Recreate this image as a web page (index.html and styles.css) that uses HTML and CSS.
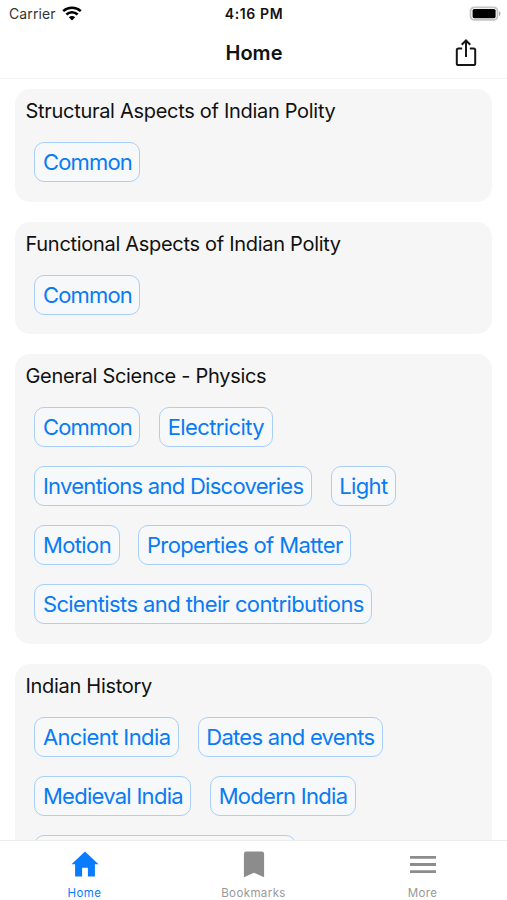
FILE: index.html
```html
<!DOCTYPE html>
<html lang="en">
<head>
<meta charset="utf-8">
<title>Home</title>
<link rel="stylesheet" href="styles.css">
</head>
<body>
<div class="app">
  <div class="status">
    <div class="carrier"><span>Carrier</span>
      <svg width="20" height="15" viewBox="0 0 20 15" fill="none" stroke="#000" stroke-width="2.5"><path d="M1.2 5.2C6.2.6 13.8.6 18.8 5.2M4.4 8.5c3.2-3 8-3 11.2 0"/><path d="M10 14.5 6.8 11.2c1.8-1.7 4.6-1.7 6.4 0z" fill="#000" stroke="none"/></svg>
    </div>
    <div class="time">4:16 PM</div>
    <div class="battery"><svg width="32" height="16" viewBox="0 0 32 16"><rect x="1.5" y="1.3" width="27" height="12.6" rx="3.8" fill="#fff" stroke="#c4c4c4" stroke-width="1.8"/><rect x="3.6" y="3" width="23" height="9.2" rx="1.6" fill="#000"/><path d="M30 5.3c2 .8 2 4 0 4.8z" fill="#aaa"/></svg></div>
  </div>
  <header class="nav">
    <h1>Home</h1>
    <svg class="share" width="22" height="28" viewBox="0 0 22 28" fill="none" stroke="#161616" stroke-width="2"><path d="M7.2 9.4H3.4a1.6 1.6 0 0 0-1.6 1.6v13.4A1.6 1.6 0 0 0 3.4 26h15.2a1.6 1.6 0 0 0 1.6-1.6V11a1.6 1.6 0 0 0-1.6-1.6h-3.8M11 18V1.8M6.7 5.8 11 1.5l4.3 4.3"/></svg>
  </header>
  <main class="list">
    <section class="card"><h2>Structural Aspects of Indian Polity</h2>
      <div class="chips"><a class="chip tight">Common</a></div></section>
    <section class="card"><h2>Functional Aspects of Indian Polity</h2>
      <div class="chips"><a class="chip tight">Common</a></div></section>
    <section class="card"><h2>General Science - Physics</h2>
      <div class="chips"><a class="chip tight">Common</a><a class="chip">Electricity</a><a class="chip snug">Inventions and Discoveries</a><a class="chip">Light</a><a class="chip">Motion</a><a class="chip">Properties of Matter</a><a class="chip">Scientists and their contributions</a></div></section>
    <section class="card"><h2>Indian History</h2>
      <div class="chips"><a class="chip">Ancient India</a><a class="chip snug">Dates and events</a><a class="chip snug">Medieval India</a><a class="chip snug">Modern India</a><a class="chip chip-partial"></a></div></section>
  </main>
  <nav class="tabs">
    <a class="tab active"><svg width="28" height="28" viewBox="0 0 28 28" fill="currentColor"><path d="M14 1.5.5 14.2h3.6v12.3h7v-8.7h5.8v8.7h7V14.2h3.6z"/></svg><span>Home</span></a>
    <a class="tab"><svg width="28" height="28" viewBox="0 0 28 28" fill="currentColor"><path d="M6.3 1.6h15.4A2.4 2.4 0 0 1 24.1 4v23.2L14 22.8 3.9 27.2V4a2.4 2.4 0 0 1 2.4-2.4z"/></svg><span>Bookmarks</span></a>
    <a class="tab"><svg width="28" height="28" viewBox="0 0 28 28" fill="currentColor"><path d="M1 5.9h26v2.8H1zM1 13.1h26v2.8H1zM1 20.3h26v2.8H1z"/></svg><span>More</span></a>
  </nav>
</div>
</body>
</html>
```
FILE: styles.css
```css
* { box-sizing: border-box; }
body { margin: 0; background: #fff; font-family: Inter, "Liberation Sans", sans-serif; color: #111; }
.app { height: 900px; display: flex; flex-direction: column; overflow: hidden; }
.status { height: 27px; flex: none; display: grid; grid-template-columns: 1fr auto 1fr; align-items: center; padding: 0 6px 0 9px; font-size: 14px; }
.carrier { display: flex; align-items: center; gap: 6px; color: #333; }
.carrier span { letter-spacing: .1px; }
.time { font-weight: 600; letter-spacing: .6px; color: #111; margin-right: 2px; }
.battery { display: flex; justify-content: flex-end; }
.nav { height: 52px; flex: none; border-bottom: 1px solid #f4f4f4; display: grid; grid-template-columns: 1fr auto 1fr; align-items: center; padding: 0 30px 0 31px; }
.nav h1 { grid-column: 2; margin: 0; font-size: 20px; line-height: 24px; font-weight: 600; letter-spacing: 0; }
.share { justify-self: end; }
.list { flex: 1; min-height: 0; overflow: hidden; padding: 10.4px 15px 0; }
.card { background: #f6f6f6; border-radius: 15px; padding: 9px 10px 19.2px 10.5px; margin-bottom: 20px; }
.card h2 { margin: 0 0 18px; height: 26px; font-size: 20px; line-height: 26px; font-weight: 400; letter-spacing: -.3px; white-space: nowrap; }
.chips { display: flex; flex-wrap: wrap; gap: 19.2px 18.8px; padding-left: 8.9px; }
.chip { height: 40px; padding: 0 7.5px; border: 1px solid #a9cffa; border-radius: 10px; background: #f7f8f9; color: #087bf5; font-size: 22px; line-height: 38px; letter-spacing: -.6px; white-space: nowrap; }
.snug { letter-spacing: -.72px; }
.tight { letter-spacing: -.83px; }
.chip-partial { width: 262px; }
.tabs { height: 60px; flex: none; display: grid; grid-template-columns: repeat(3, 1fr); border-top: 1px solid #ececec; background: #fff; }
.tab { display: flex; flex-direction: column; align-items: center; padding-top: 9px; color: #8c8c8c; }
.tab span { font-size: 11.5px; line-height: 14px; margin-top: 8px; letter-spacing: .4px; color: #999; }
.active, .active span { color: #087bff; }
```
